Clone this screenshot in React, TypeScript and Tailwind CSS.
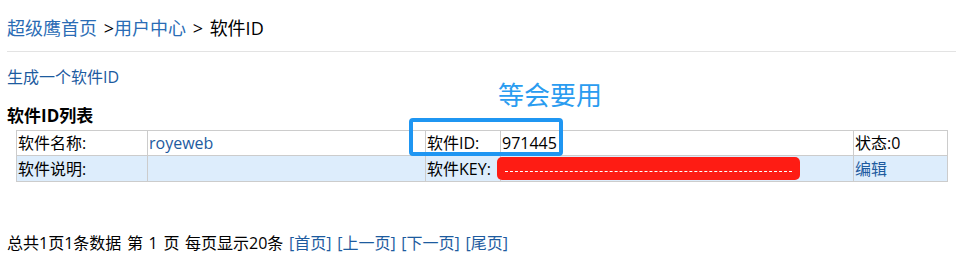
export default function App() {
  const font = { fontFamily: '"Open Sans", "Noto Sans CJK SC", sans-serif' };
  return (
    <div className="relative w-[956px] h-[261px] bg-white text-black pl-[7px] [word-spacing:1.5px]" style={font}>
      {/* Breadcrumb */}
      <div className="pt-[16px] text-[18px] leading-[24px] [word-spacing:2px]">
        <a className="text-[#2a6cb5]">超级鹰首页</a>
        <span> &gt;</span>
        <a className="text-[#2a6cb5]">用户中心</a>
        <span> &gt; </span>
        <span>软件ID</span>
      </div>
      <div className="mt-[11px] h-px bg-[#e3e3e3]" />

      <div className="mt-[13px] text-[16px] leading-[24px]">
        <a className="text-[#1d5b9f]">生成一个软件ID</a>
      </div>

      <h3 className="mt-[15px] text-[17px] leading-[24px] font-bold">软件ID列表</h3>

      <table className="mt-[2px] ml-[9px] w-[931px] border-collapse table-fixed text-[16px] leading-[22px]">
        <colgroup>
          <col className="w-[131px]" />
          <col className="w-[278px]" />
          <col className="w-[75px]" />
          <col className="w-[353px]" />
          <col className="w-[94px]" />
        </colgroup>
        <tbody>
          <tr className="h-[25px] bg-white">
            <td className="border border-[#cccccc] pl-px">软件名称:</td>
            <td className="border border-[#cccccc] pl-px text-[#1d5b9f]">royeweb</td>
            <td className="border border-[#cccccc] pl-px">软件ID:</td>
            <td className="border border-[#cccccc] pl-px">971445</td>
            <td className="border border-[#cccccc] pl-px">状态:0</td>
          </tr>
          <tr className="h-[26px] bg-[#ddedfc]">
            <td className="border border-[#cccccc] pl-px">软件说明:</td>
            <td className="border border-[#cccccc] pl-px"></td>
            <td className="border border-[#cccccc] pl-px">软件KEY:</td>
            <td className="border border-[#cccccc] pl-px"></td>
            <td className="border border-[#cccccc] pl-px text-[#1d5b9f]">编辑</td>
          </tr>
        </tbody>
      </table>

      <div className="mt-[49px] text-[16px] leading-[24px]">
        总共1页1条数据 第 1 页 每页显示20条{" "}
        <a className="text-[#1d5b9f]">[首页]</a>{" "}
        <a className="text-[#1d5b9f]">[上一页]</a>{" "}
        <a className="text-[#1d5b9f]">[下一页]</a>{" "}
        <a className="text-[#1d5b9f]">[尾页]</a>
      </div>

      {/* Annotations drawn over the screenshot */}
      <div className="absolute left-[498px] top-[78px] text-[26px] leading-[34px] text-[#2a9cf0]">等会要用</div>
      <div className="absolute left-[409px] top-[118px] w-[154px] h-[38px] border-4 border-[#1f96f2] rounded-[4px]" />
      <div className="absolute left-[497px] top-[157px] w-[303px] h-[23px] bg-[#fe1c14] rounded-[5px] px-[8px] pt-[14px]">
        <div className="border-b border-dashed border-white" />
      </div>
    </div>
  );
}
